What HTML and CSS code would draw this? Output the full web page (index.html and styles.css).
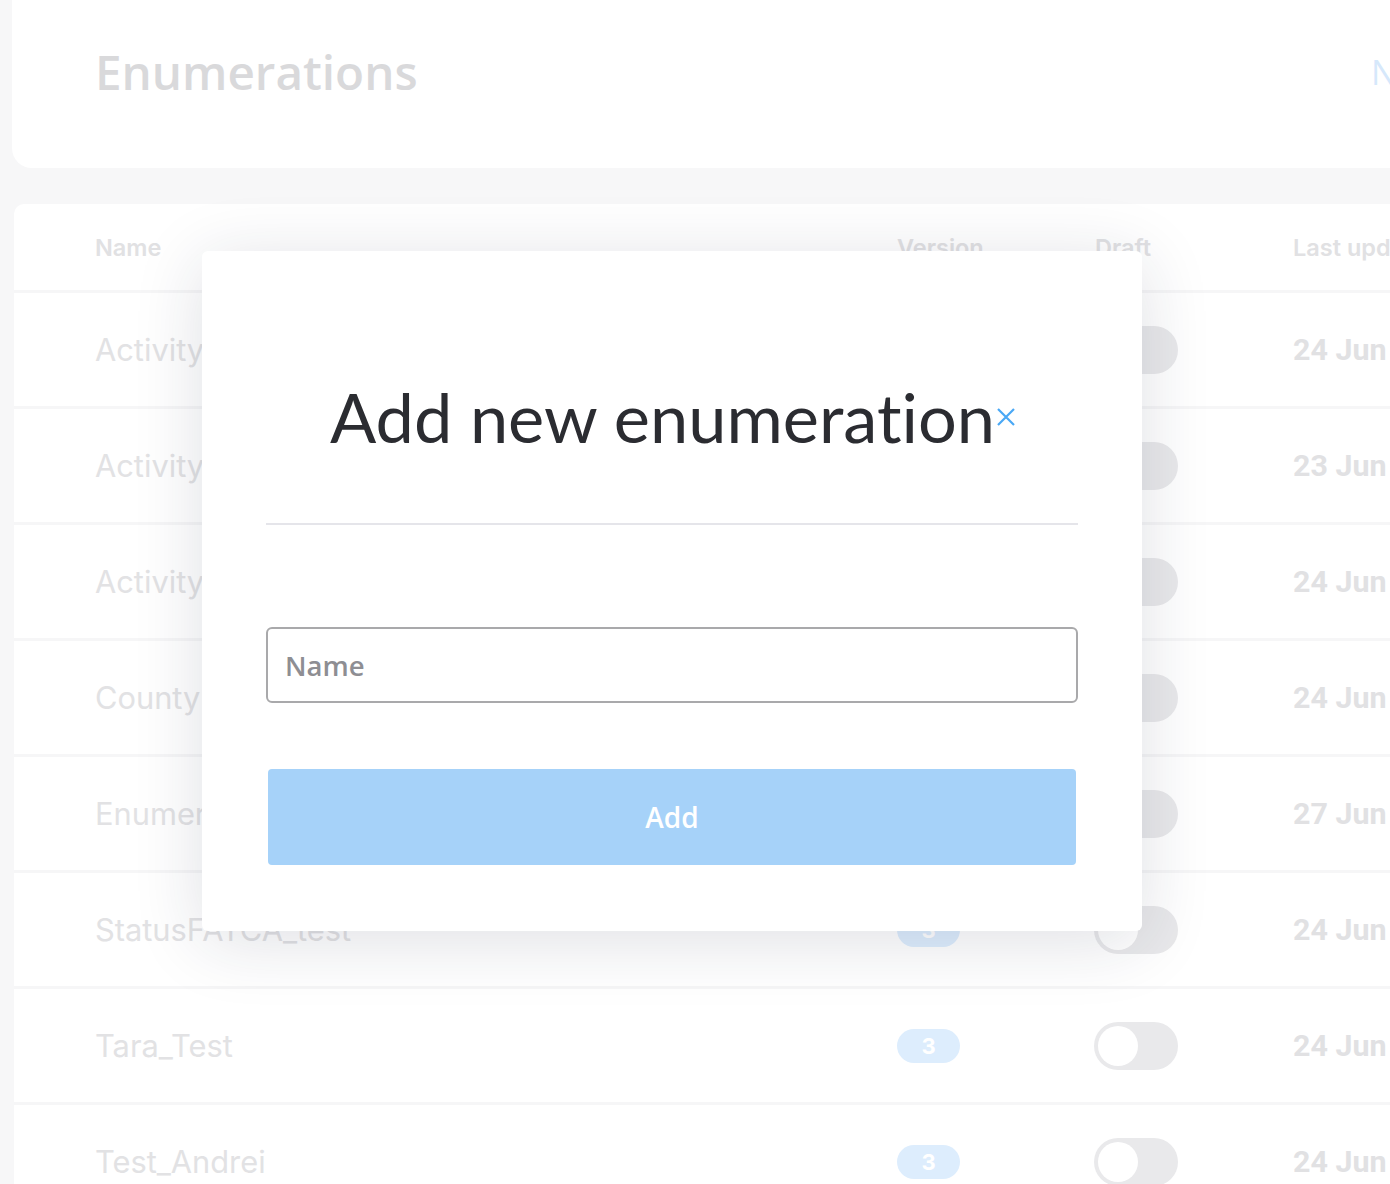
FILE: index.html
```html
<!DOCTYPE html>
<html lang="en">
<head>
<meta charset="utf-8">
<title>Enumerations</title>
<link rel="stylesheet" href="styles.css">
</head>
<body>
<div class="page">
  <header class="top-card">
    <h1 class="page-title">Enumerations</h1>
    <span class="new-btn">New enumeration</span>
  </header>

  <section class="table-card">
    <div class="row head">
      <div>Name</div>
      <div>Version</div>
      <div>Draft</div>
      <div>Last updated</div>
    </div>
    <div class="row"><div class="name">ActivityType</div><div><span class="badge">3</span></div><div><span class="toggle"><span class="knob"></span></span></div><div class="date">24 Jun 2022</div></div>
    <div class="row"><div class="name">ActivityStatus</div><div><span class="badge">3</span></div><div><span class="toggle"><span class="knob"></span></span></div><div class="date">23 Jun 2022</div></div>
    <div class="row"><div class="name">ActivityCategory</div><div><span class="badge">3</span></div><div><span class="toggle"><span class="knob"></span></span></div><div class="date">24 Jun 2022</div></div>
    <div class="row"><div class="name">County</div><div><span class="badge">3</span></div><div><span class="toggle"><span class="knob"></span></span></div><div class="date">24 Jun 2022</div></div>
    <div class="row"><div class="name">Enumeration_test</div><div><span class="badge">3</span></div><div><span class="toggle"><span class="knob"></span></span></div><div class="date">27 Jun 2022</div></div>
    <div class="row"><div class="name">StatusFATCA_test</div><div><span class="badge">3</span></div><div><span class="toggle"><span class="knob"></span></span></div><div class="date">24 Jun 2022</div></div>
    <div class="row"><div class="name">Tara_Test</div><div><span class="badge">3</span></div><div><span class="toggle"><span class="knob"></span></span></div><div class="date">24 Jun 2022</div></div>
    <div class="row"><div class="name">Test_Andrei</div><div><span class="badge">3</span></div><div><span class="toggle"><span class="knob"></span></span></div><div class="date">24 Jun 2022</div></div>
  </section>
</div>

<div class="modal">
  <h2 class="modal-title">Add new enumeration<svg class="close" width="20" height="20" viewBox="0 0 20 20"><path d="M2 2 L18 18 M18 2 L2 18" stroke="#4aa8f5" stroke-width="2.2" fill="none"/></svg></h2>
  <hr class="divider">
  <input class="name-input" type="text" placeholder="Name">
  <button class="add-btn">Add</button>
</div>
</body>
</html>
```

FILE: styles.css
```css
html, body {
  margin: 0;
  padding: 0;
}
body {
  background: #f7f7f8;
  width: 1390px;
  height: 1184px;
  overflow: hidden;
  position: relative;
  font-family: "Inter", "Liberation Sans", sans-serif;
}
.page {
  padding-left: 12px;
  width: 1700px;
}
.top-card {
  background: #fff;
  height: 168px;
  border-radius: 0 0 0 20px;
  display: grid;
  grid-template-columns: 1277px auto;
  align-items: center;
  padding-left: 83px;
  box-sizing: border-box;
}
.page-title {
  margin: 0;
  font-family: "Open Sans", sans-serif;
  font-weight: 600;
  font-size: 47.6px;
  color: #d9d9db;
  line-height: 1;
  padding-bottom: 24px;
}
.new-btn {
  font-family: "Open Sans", sans-serif;
  font-size: 34px;
  color: #d6e8fb;
  white-space: nowrap;
  padding-bottom: 24px;
  margin-left: -1px;
}
.table-card {
  margin-top: 36px;
  margin-left: 2px;
  background: #fff;
  border-radius: 10px 0 0 0;
}
.row {
  display: grid;
  grid-template-columns: 802px 198px 198px 1fr;
  align-items: center;
  padding-left: 81px;
  height: 113px;
  border-bottom: 3px solid #f6f6f7;
}
.row.head {
  height: 86px;
  font-size: 23.5px;
  font-weight: 600;
  color: #e1e1e3;
  white-space: nowrap;
}
.name {
  font-size: 30.8px;
  color: #e2e2e4;
  white-space: nowrap;
}
.badge {
  display: inline-flex;
  align-items: center;
  justify-content: center;
  width: 63px;
  height: 34px;
  border-radius: 17px;
  background: #ddedfd;
  color: #fff;
  font-weight: 700;
  font-size: 22px;
}
.toggle {
  display: block;
  position: relative;
  width: 84px;
  height: 48px;
  border-radius: 24px;
  background: #e9e9eb;
  margin-left: -1px;
}
.knob {
  position: absolute;
  left: 4px;
  top: 4px;
  width: 40px;
  height: 40px;
  border-radius: 50%;
  background: #fff;
}
.date {
  font-family: "Roboto", sans-serif;
  font-weight: 700;
  font-size: 30.4px;
  color: #e1e1e3;
  white-space: nowrap;
}

.modal {
  position: absolute;
  left: 202px;
  top: 251px;
  width: 940px;
  box-sizing: border-box;
  padding: 123px 64px 66px;
  background: #fff;
  border-radius: 6px;
  box-shadow: 0 10px 70px rgba(25, 35, 65, 0.14);
  display: flex;
  flex-direction: column;
}
.modal-title {
  margin: 0;
  text-align: center;
  font-family: "Lato", sans-serif;
  font-weight: 400;
  font-size: 68.5px;
  line-height: 85px;
  color: #2b2c31;
  white-space: nowrap;
  font-variant-ligatures: none;
  padding-left: 2px;
}
.close {
  vertical-align: 16px;
  margin-left: 1px;
}
.divider {
  margin: 64px 0 0;
  border: none;
  height: 2px;
  background: #e5e5ea;
}
.name-input {
  margin-top: 102px;
  height: 76px;
  box-sizing: border-box;
  border: 2px solid #a9a9ab;
  border-radius: 6px;
  padding: 0 17px;
  font-family: "Open Sans", sans-serif;
  font-weight: 600;
  font-size: 27.5px;
  color: #2b2c31;
  outline: none;
}
.name-input::placeholder {
  color: #8e8e93;
}
.add-btn {
  margin: 66px 2px 0;
  height: 96px;
  border: none;
  border-radius: 4px;
  background: #a6d2f9;
  color: #fff;
  font-family: "Open Sans", sans-serif;
  font-weight: 600;
  font-size: 28px;
}
```
